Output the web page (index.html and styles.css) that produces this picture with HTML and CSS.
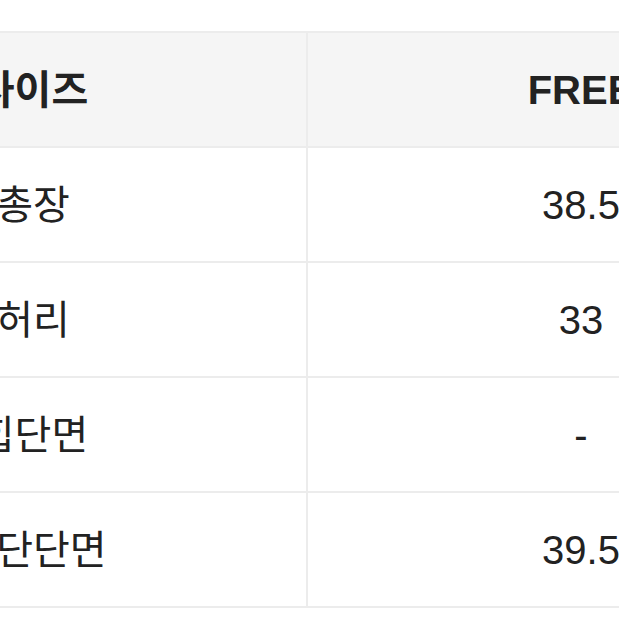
FILE: index.html
```html
<!DOCTYPE html>
<html lang="ko">
<head>
<meta charset="utf-8">
<title>사이즈</title>
<link rel="stylesheet" href="styles.css">
</head>
<body>
<div class="size-table">
  <div class="row head">
    <div class="cell">사이즈</div>
    <div class="cell val">FREE</div>
  </div>
  <div class="row">
    <div class="cell">총장</div>
    <div class="cell val">38.5</div>
  </div>
  <div class="row">
    <div class="cell">허리</div>
    <div class="cell val">33</div>
  </div>
  <div class="row">
    <div class="cell">힙단면</div>
    <div class="cell val">-</div>
  </div>
  <div class="row">
    <div class="cell">밑단단면</div>
    <div class="cell val">39.5</div>
  </div>
</div>
</body>
</html>
```
FILE: styles.css
```css
html, body {
  margin: 0;
  padding: 0;
  background: #ffffff;
  overflow: hidden;
}
body {
  font-family: "Liberation Sans", "Noto Sans CJK KR", sans-serif;
  color: #222222;
}
.size-table {
  margin: 31px 0 0 -240px;
  width: 1094px;
  border-bottom: 2px solid #ececec;
}
.row {
  display: flex;
  height: 115px;
  box-sizing: border-box;
  border-top: 2px solid #ececec;
}
.row.head {
  background: #f5f5f5;
  font-weight: 700;
}
.cell {
  flex: 0 0 546px;
  display: flex;
  align-items: center;
  justify-content: center;
  font-size: 40px;
  line-height: 1;
}
.cell.val {
  flex: 1 1 auto;
  border-left: 2px solid #ececec;
}
```
